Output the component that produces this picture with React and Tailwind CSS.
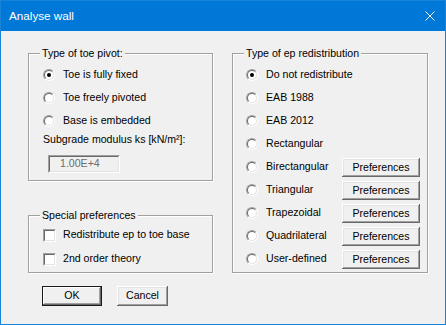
import React from 'react'

const font = { fontFamily: '"Liberation Sans", Arial, sans-serif' }

function Radio({ checked }) {
  return (
    <span className="w-[12px] h-[12px] shrink-0 rounded-full border border-t-[#a0a0a0] border-l-[#a0a0a0] border-r-white border-b-white">
      <span className="w-full h-full rounded-full border border-t-[#696969] border-l-[#696969] border-r-[#e3e3e3] border-b-[#e3e3e3] bg-white flex items-center justify-center">
        {checked && <span className="w-[4px] h-[4px] rounded-full bg-black" />}
      </span>
    </span>
  )
}

function Checkbox() {
  return (
    <span className="w-[13px] h-[13px] shrink-0 border border-t-[#a0a0a0] border-l-[#a0a0a0] border-r-white border-b-white">
      <span className="block w-full h-full border border-t-[#696969] border-l-[#696969] border-r-[#e3e3e3] border-b-[#e3e3e3] bg-white" />
    </span>
  )
}

function Button({ children, className = '', isDefault = false }) {
  return (
    <div
      className={
        'flex items-center justify-center bg-[#f0f0f0] text-black ' +
        (isDefault
          ? 'border border-[#1a1a1a] shadow-[inset_-1px_-1px_0_#696969,inset_1px_1px_0_#fff,inset_-2px_-2px_0_#a0a0a0] '
          : 'shadow-[inset_-1px_-1px_0_#696969,inset_1px_1px_0_#fff,inset_-2px_-2px_0_#a0a0a0,inset_2px_2px_0_#e3e3e3] ') +
        className
      }
    >
      {children}
    </div>
  )
}

function Group({ title, className = '', children }) {
  return (
    <div className={'relative border border-[#a0a0a0] shadow-[1px_1px_0_#fff,inset_1px_1px_0_#fff] ' + className}>
      <span className="absolute top-[-7px] left-[11px] px-[2px] bg-[#f0f0f0] leading-[13px] whitespace-nowrap">
        {title}
      </span>
      {children}
    </div>
  )
}

const toeOptions = ['Toe is fully fixed', 'Toe freely pivoted', 'Base is embedded']

const epOptions = [
  { label: 'Do not redistribute' },
  { label: 'EAB 1988' },
  { label: 'EAB 2012' },
  { label: 'Rectangular' },
  { label: 'Birectangular', prefs: true },
  { label: 'Triangular', prefs: true },
  { label: 'Trapezoidal', prefs: true },
  { label: 'Quadrilateral', prefs: true },
  { label: 'User-defined', prefs: true },
]

export default function App() {
  return (
    <div
      className="w-[446px] h-[325px] bg-[#f0f0f0] border border-[#1883d7] text-[10.6px] text-black flex flex-col"
      style={font}
    >
      {/* Title bar */}
      <div className="h-[30px] shrink-0 bg-[#0078d7] flex items-center justify-between pl-[8px] pr-[10px]">
        <span className="text-white text-[11.7px]" style={{ fontFamily: '"Segoe UI", "Liberation Sans", sans-serif' }}>
          Analyse wall
        </span>
        <svg width="10" height="10" viewBox="0 0 10 10" className="mr-[0px]">
          <path d="M0.5 0.5 L9.5 9.5 M9.5 0.5 L0.5 9.5" stroke="#fff" strokeWidth="1" />
        </svg>
      </div>

      {/* Body */}
      <div className="flex pl-[27px] pt-[22px] gap-[19px]">
        {/* Left column */}
        <div className="flex flex-col w-[185px]">
          <Group title="Type of toe pivot:" className="h-[128px] pt-[9px] pl-[14px]">
            {toeOptions.map((t, i) => (
              <div key={t} className="h-[23px] flex items-center">
                <Radio checked={i === 0} />
                <span className="ml-[8px]">{t}</span>
              </div>
            ))}
            <div className="h-[15px] flex items-center">Subgrade modulus ks [kN/m²]:</div>
            <div className="mt-[8px] ml-[5px] w-[72px] h-[18px] border border-t-[#a0a0a0] border-l-[#a0a0a0] border-r-white border-b-white">
              <div className="w-full h-full border border-t-[#696969] border-l-[#696969] border-r-[#e3e3e3] border-b-[#e3e3e3] flex items-center pl-[10px] text-[#6d6d6d]">
                1.00E+4
              </div>
            </div>
          </Group>

          <Group title="Special preferences" className="h-[58px] mt-[34px] pt-[7px] pl-[14px]">
            {['Redistribute ep to toe base', '2nd order theory'].map((t) => (
              <div key={t} className="h-[24px] flex items-center">
                <Checkbox />
                <span className="ml-[7px]">{t}</span>
              </div>
            ))}
          </Group>

          <div className="flex gap-[15px] mt-[13px] ml-[14px]">
            <Button isDefault className="w-[60px] h-[20px]">OK</Button>
            <Button className="w-[51px] h-[20px]">Cancel</Button>
          </div>
        </div>

        {/* Right column */}
        <Group title="Type of ep redistribution" className="w-[196px] h-[220px] pt-[9px] pl-[13px] pr-[7px]">
          {epOptions.map((o, i) => (
            <div key={o.label} className="h-[23px] flex items-center">
              <Radio checked={i === 0} />
              <span className="ml-[8px]">{o.label}</span>
              {o.prefs && (
                <Button className="ml-auto mt-[2px] w-[78px] h-[19px]">Preferences</Button>
              )}
            </div>
          ))}
        </Group>
      </div>
    </div>
  )
}
